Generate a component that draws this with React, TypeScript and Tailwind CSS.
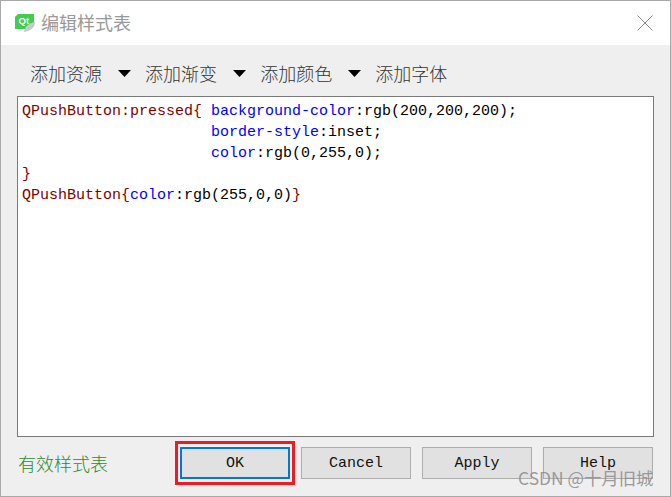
import React from "react";

const mono = "font-['Liberation_Mono',monospace]";

function Tool({ label, arrow }: { label: string; arrow?: boolean }) {
  return (
    <div className="flex items-center">
      <span className="text-[18px] leading-[22px] text-[#333] font-['Noto_Sans_CJK_SC',sans-serif] font-light w-[72px] whitespace-nowrap">{label}</span>
      {arrow && (
        <svg width="13" height="7" viewBox="0 0 13 7" className="ml-[16px] mr-[14.1px]">
          <path d="M0 0H13L6.5 7Z" fill="#000" />
        </svg>
      )}
    </div>
  );
}

function Btn({ children }: { children: React.ReactNode }) {
  return (
    <div className={`h-[32px] w-[110px] border border-[#adadad] bg-[#e1e1e1] flex items-center justify-center pt-[2px] text-[15px] text-[#111] ${mono}`}>
      {children}
    </div>
  );
}

export default function App() {
  return (
    <div className="relative w-[671px] h-[497px] bg-[#efefef] border border-[#a9a9a9] flex flex-col overflow-hidden box-border">
      <div className="h-[44px] bg-white flex items-center pl-[14px] pr-[17px] shrink-0">
        <svg width="21" height="20" viewBox="0 0 21 20" className="shrink-0">
          <path d="M3 1H19V13L16 16H0V4Z" fill="#41cd52" />
          <text x="3.5" y="11" fontSize="9.5" fill="#fff" fontFamily="Liberation Sans, sans-serif" fontWeight="700">Qt</text>
          <path d="M9 19C10 13 14 10 20 9C20 14 16 18 9 19Z" fill="#c9c9c9" />
        </svg>
        <span className="ml-[5px] pb-[3px] text-[18px] leading-[24px] text-[#999] font-['Noto_Sans_CJK_SC',sans-serif]">编辑样式表</span>
        <svg width="16" height="16" viewBox="0 0 16 16" className="ml-auto">
          <path d="M0.5 0.5L15.5 15.5M15.5 0.5L0.5 15.5" stroke="#8a8a8a" strokeWidth="1" fill="none" />
        </svg>
      </div>
      <div className="h-[51px] flex items-center pl-[29px] pt-[5px] shrink-0">
        <Tool label="添加资源" arrow />
        <Tool label="添加渐变" arrow />
        <Tool label="添加颜色" arrow />
        <Tool label="添加字体" />
      </div>
      <div className={`ml-[16px] w-[637px] h-[341px] border border-[#7a7a7a] bg-white pl-[4px] pt-[4px] text-[15px] leading-[21px] whitespace-pre text-black shrink-0 ${mono}`}>
        <div><span className="text-[#800000]">QPushButton:pressed{"{"}</span> <span className="text-[#0000ff]">background-color</span>:rgb(200,200,200);</div>
        <div>{"                     "}<span className="text-[#0000ff]">border-style</span>:inset;</div>
        <div>{"                     "}<span className="text-[#0000ff]">color</span>:rgb(0,255,0);</div>
        <div className="text-[#800000]">{"}"}</div>
        <div><span className="text-[#800000]">QPushButton{"{"}</span><span className="text-[#0000ff]">color</span>:rgb(255,0,0)<span className="text-[#800000]">{"}"}</span></div>
      </div>
      <div className="flex items-center ml-[17px] mt-[4px] h-[44px]">
        <span className="w-[157px] pb-[1px] text-[18px] leading-[22px] text-[#2e8b2e] font-['Noto_Sans_CJK_SC',sans-serif] font-light">有效样式表</span>
        <div className="border-[3px] border-[#ed1c24] px-[2px] py-[3px] flex">
          <div className={`h-[32px] w-[110px] border-2 border-[#0078d7] bg-[#e1e1e1] flex items-center justify-center pt-[2px] text-[15px] text-[#111] ${mono}`}>OK</div>
        </div>
        <div className="flex gap-[11px] ml-[6px]">
          <Btn>Cancel</Btn>
          <Btn>Apply</Btn>
          <Btn>Help</Btn>
        </div>
      </div>
      <span className="absolute left-[517px] top-[466px] text-[17.4px] leading-[22px] text-[#8f8f8f]/90 font-['Noto_Sans_CJK_SC',sans-serif] whitespace-nowrap">CSDN @十月旧城</span>
    </div>
  );
}
